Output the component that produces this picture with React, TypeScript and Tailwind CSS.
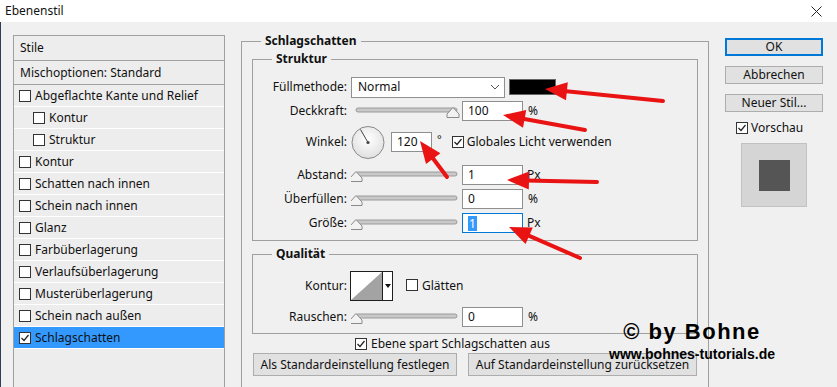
import React from "react";

const Check = ({ checked = false }: { checked?: boolean }) => (
  <span className="inline-flex w-[12px] h-[12px] border border-[#333333] bg-white items-center justify-center shrink-0">
    {checked && (
      <svg width="10" height="10" viewBox="0 0 10 10">
        <path d="M1.5 5 L4 7.5 L8.5 2" fill="none" stroke="#222" strokeWidth="1.2" />
      </svg>
    )}
  </span>
);

const Slider = ({ pos }: { pos: number }) => {
  const cx = 5 + pos * 97;
  return (
    <svg width="111" height="22" className="block shrink-0 ml-[4px]">
      <rect x="5" y="8" width="101" height="4" rx="2" fill="#c9c9c9" stroke="#9a9a9a" strokeWidth="1" />
      <path
        d={`M${cx - 6} 17.5 L${cx - 6} 14 L${cx} 7.5 L${cx + 6} 14 L${cx + 6} 17.5 Z`}
        fill="#f2f2f2"
        stroke="#8a8a8a"
        strokeWidth="1"
      />
    </svg>
  );
};

const Input = ({ value, sel = false, w = 61 }: { value: string; sel?: boolean; w?: number }) => (
  <div
    className={`h-[20px] bg-white flex items-center pl-[5px] shrink-0 ${
      sel ? "border border-[#0078d7]" : "border border-[#8f8f8f]"
    }`}
    style={{ width: w }}
  >
    {sel ? <span className="bg-[#3399ff] text-white px-[1px] leading-[15px]">{value}</span> : <span>{value}</span>}
  </div>
);

const Label = ({ children }: { children: React.ReactNode }) => (
  <span className="w-[94px] text-right shrink-0">{children}</span>
);

const Arrow = ({ s }: { s: number[] }) => {
  const [x1, y1, x2, y2] = s;
  const dx = x2 - x1;
  const dy = y2 - y1;
  const len = Math.hypot(dx, dy);
  const ux = dx / len;
  const uy = dy / len;
  const L = 22;
  const W = 9;
  const bx = x2 - ux * L;
  const by = y2 - uy * L;
  const nx = -uy;
  const ny = ux;
  return (
    <g>
      <line x1={x1} y1={y1} x2={bx + ux * 3} y2={by + uy * 3} stroke="#ea1313" strokeWidth="4" strokeLinecap="round" />
      <polygon
        points={`${x2},${y2} ${bx + nx * W},${by + ny * W} ${bx - nx * W},${by - ny * W}`}
        fill="#ea1313"
      />
    </g>
  );
};

const styles = [
  { t: "Abgeflachte Kante und Relief" },
  { t: "Kontur", i: true },
  { t: "Struktur", i: true },
  { t: "Kontur" },
  { t: "Schatten nach innen" },
  { t: "Schein nach innen" },
  { t: "Glanz" },
  { t: "Farbüberlagerung" },
  { t: "Verlaufsüberlagerung" },
  { t: "Musterüberlagerung" },
  { t: "Schein nach außen" },
  { t: "Schlagschatten", sel: true },
];

export default function App() {
  const arrows = [
    [663, 101, 545, 89],
    [585, 130, 503, 115],
    [447, 177, 420, 141],
    [597, 182, 507, 180],
    [580, 258, 509, 227],
  ];
  return (
    <div className="w-[837px] h-[387px] relative overflow-hidden bg-[#f0f0f0] font-['Noto_Sans',sans-serif] text-[12px] text-[#111111] leading-none">
      {/* title bar */}
      <div className="h-[22px] bg-white flex items-center justify-between pl-[5px] pr-[15px]">
        <span>Ebenenstil</span>
        <svg width="11" height="11" viewBox="0 0 11 11">
          <path d="M0.5 0.5 L10.5 10.5 M10.5 0.5 L0.5 10.5" stroke="#222" strokeWidth="1" />
        </svg>
      </div>

      <div className="flex items-start pl-[12px] pt-[13px] border-l border-[#2e3d5a] h-[365px]">
        {/* left styles panel */}
        <div className="w-[212px] h-[370px] border border-[#a0a0a0] bg-[#ededed] shrink-0">
          <div className="h-[25px] border-b border-[#a0a0a0] flex items-center pl-[6px]">Stile</div>
          <div className="h-[24px] border-b border-[#a0a0a0] flex items-center pl-[6px]">Mischoptionen: Standard</div>
          {styles.map((s, k) => (
            <div
              key={k}
              className={`h-[22px] border-b border-white flex items-center gap-[4px] ${s.i ? "pl-[19px]" : "pl-[5px]"} ${
                s.sel ? "bg-[#3399ff]" : ""
              }`}
            >
              <Check checked={!!s.sel} />
              <span>{s.t}</span>
            </div>
          ))}
        </div>

        {/* middle */}
        <fieldset className="w-[468px] h-[400px] border border-[#a0a0a0] ml-[16px] -mt-[2px] shrink-0">
          <legend className="ml-[19px] px-[4px] font-bold leading-[16px]">Schlagschatten</legend>
          <div className="px-[10px] pt-[2px]">
            <fieldset className="border border-[#a0a0a0]">
              <legend className="ml-[19px] px-[4px] font-bold leading-[16px]">Struktur</legend>
              <div className="flex flex-col pb-[6px]">
                <div className="flex items-center h-[22px] mt-[9px]">
                  <Label>Füllmethode:</Label>
                  <div className="ml-[4px] w-[154px] h-[21px] bg-white border border-[#8f8f8f] flex items-center justify-between pl-[6px] pr-[4px]">
                    <span>Normal</span>
                    <svg width="10" height="6" viewBox="0 0 10 6">
                      <path d="M1 1 L5 5 L9 1" fill="none" stroke="#555" strokeWidth="1" />
                    </svg>
                  </div>
                  <div className="ml-[4px] w-[47px] h-[16px] bg-black border border-[#666]" />
                </div>
                <div className="flex items-center h-[22px] mt-[2px]">
                  <Label>Deckkraft:</Label>
                  <Slider pos={1} />
                  <Input value="100" />
                  <span className="ml-[5px]">%</span>
                </div>
                <div className="flex items-center h-[34px] mt-[3px]">
                  <Label>Winkel:</Label>
                  <svg width="35" height="35" viewBox="0 0 35 35" className="ml-[4px] shrink-0">
                    <defs>
                      <radialGradient id="dial" cx="50%" cy="40%" r="60%">
                        <stop offset="0%" stopColor="#ffffff" />
                        <stop offset="100%" stopColor="#e0e0e0" />
                      </radialGradient>
                    </defs>
                    <circle cx="17" cy="17.5" r="16" fill="url(#dial)" stroke="#8a8a8a" strokeWidth="1" />
                    <line x1="17" y1="17.5" x2="9.5" y2="4.5" stroke="#444" strokeWidth="1" />
                    <circle cx="17" cy="17.5" r="1.6" fill="#444" />
                  </svg>
                  <div className="ml-[5px]">
                    <Input value="120" w={41} />
                  </div>
                  <span className="ml-[5px] self-start mt-[8px] text-[11px]">°</span>
                  <span className="ml-[10px]">
                    <Check checked />
                  </span>
                  <span className="ml-[3px]">Globales Licht verwenden</span>
                </div>
                <div className="flex items-center h-[22px] mt-[5px]">
                  <Label>Abstand:</Label>
                  <Slider pos={0} />
                  <Input value="1" />
                  <span className="ml-[4px]">Px</span>
                </div>
                <div className="flex items-center h-[22px] mt-[2px]">
                  <Label>Überfüllen:</Label>
                  <Slider pos={0} />
                  <Input value="0" />
                  <span className="ml-[5px]">%</span>
                </div>
                <div className="flex items-center h-[22px] mt-[2px]">
                  <Label>Größe:</Label>
                  <Slider pos={0} />
                  <Input value="1" sel />
                  <span className="ml-[4px]">Px</span>
                </div>
              </div>
            </fieldset>

            <fieldset className="border border-[#a0a0a0] mt-[5px]">
              <legend className="ml-[19px] px-[4px] font-bold leading-[16px]">Qualität</legend>
              <div className="flex flex-col pb-[5px]">
                <div className="flex items-center h-[30px] mt-[9px]">
                  <Label>Kontur:</Label>
                  <div className="ml-[3px] w-[43px] h-[30px] border border-[#1e1e1e] bg-white flex shrink-0">
                    <svg width="31" height="28" viewBox="0 0 31 28" className="block">
                      <polygon points="0,28 31,0 31,28" fill="#a3a3a3" />
                    </svg>
                    <div className="w-[10px] h-full border-l border-[#1e1e1e] flex items-center justify-center">
                      <svg width="6" height="4" viewBox="0 0 6 4">
                        <polygon points="0,0 6,0 3,4" fill="#111" />
                      </svg>
                    </div>
                  </div>
                  <span className="ml-[13px]">
                    <Check />
                  </span>
                  <span className="ml-[4px]">Glätten</span>
                </div>
                <div className="flex items-center h-[22px] mt-[5px]">
                  <Label>Rauschen:</Label>
                  <Slider pos={0} />
                  <Input value="0" />
                  <span className="ml-[5px]">%</span>
                </div>
              </div>
            </fieldset>
          </div>

          <div className="flex items-center h-[14px] mt-[3px] pl-[113px] gap-[4px]">
            <Check checked />
            <span>Ebene spart Schlagschatten aus</span>
          </div>
          <div className="flex items-center mt-[2px] pl-[11px] gap-[11px]">
            <div className="w-[204px] h-[23px] bg-[#e1e1e1] border border-[#adadad] flex items-center justify-center">
              Als Standardeinstellung festlegen
            </div>
            <div className="w-[229px] h-[23px] bg-[#e1e1e1] border border-[#adadad] flex items-center justify-center">
              Auf Standardeinstellung zurücksetzen
            </div>
          </div>
        </fieldset>

        {/* right column */}
        <div className="ml-[16px] mt-[3px] w-[98px] flex flex-col shrink-0">
          <div className="h-[18px] border-2 border-[#0078d7] bg-[#e1e1e1] flex items-center justify-center">OK</div>
          <div className="h-[18px] mt-[10px] border border-[#adadad] bg-[#e1e1e1] flex items-center justify-center">
            Abbrechen
          </div>
          <div className="h-[18px] mt-[10px] border border-[#adadad] bg-[#e1e1e1] flex items-center justify-center">
            Neuer Stil...
          </div>
          <div className="h-[14px] mt-[9px] ml-[11px] flex items-center gap-[3px]">
            <Check checked />
            <span>Vorschau</span>
          </div>
          <div className="ml-[16px] mt-[8px] w-[66px] h-[64px] bg-[#d5d5d5] border border-[#c2c2c2] flex items-center justify-center">
            <div className="w-[31px] h-[31px] bg-[#555555]" />
          </div>
        </div>
      </div>

      {/* watermark */}
      <div className="absolute left-[592px] top-[319px] w-[200px] flex flex-col items-center font-['Liberation_Sans',Arial,sans-serif] font-bold text-black">
        <span className="text-[22px] leading-[26px] tracking-[1.5px]">© by Bohne</span>
        <span className="text-[14px] leading-[16px] mt-[1px]">www.bohnes-tutorials.de</span>
      </div>

      {/* red arrows */}
      <svg className="absolute left-0 top-0 pointer-events-none" width="837" height="387">
        {arrows.map((a, k) => (
          <Arrow key={k} s={a} />
        ))}
      </svg>
    </div>
  );
}
